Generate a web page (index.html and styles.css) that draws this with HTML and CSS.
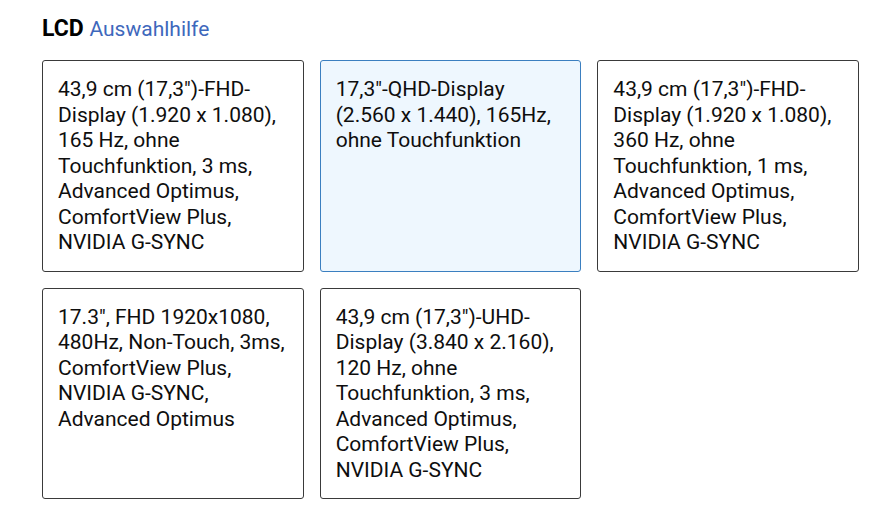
FILE: index.html
```html
<!DOCTYPE html>
<html>
<head>
    <title>LCD Auswahlhilfe</title>
<link rel="stylesheet" href="styles.css">
</head>
<body>
    <div class="picker">
        <h3 class="picker-title">LCD <a href="#" class="help">Auswahlhilfe</a></h3>
        <div class="options">
            <div class="option">43,9 cm (17,3")-FHD-Display (1.920 x 1.080), 165 Hz, ohne Touchfunktion, 3 ms, Advanced Optimus, ComfortView Plus, NVIDIA G-SYNC</div>
            <div class="option selected">17,3"-QHD-Display (2.560 x 1.440), 165Hz, ohne Touchfunktion</div>
            <div class="option">43,9 cm (17,3")-FHD-Display (1.920 x 1.080), 360 Hz, ohne Touchfunktion, 1 ms, Advanced Optimus, ComfortView Plus, NVIDIA G-SYNC</div>
            <div class="option">17.3", FHD 1920x1080, 480Hz, Non-Touch, 3ms, ComfortView Plus, NVIDIA G-SYNC, Advanced Optimus</div>
            <div class="option">43,9 cm (17,3")-UHD-Display (3.840 x 2.160), 120 Hz, ohne Touchfunktion, 3 ms, Advanced Optimus, ComfortView Plus, NVIDIA G-SYNC</div>
        </div>
    </div>
</body>
</html>
```
FILE: styles.css
```css
body {
  margin: 0;
  background-color: #ffffff;
  font-family: Roboto, "Liberation Sans", sans-serif;
  color: #0e0e0e;
}
.picker {
  padding: 13px 0 0 42px;
  width: 817px;
}
.picker-title {
  margin: 0 0 15px 0;
  font-size: 23px;
  line-height: 31px;
  font-weight: 700;
  color: #000000;
}
.help {
  font-weight: 400;
  font-size: 21px;
  color: #3e68bc;
  text-decoration: none;
}
.options {
  display: grid;
  grid-template-columns: repeat(3, 1fr);
  gap: 16px;
}
.option {
  border: 1px solid #3a3a3a;
  border-radius: 3px;
  padding: 16px 15px 15px;
  font-size: 21px;
  line-height: 25.5px;
}
.selected {
  border-color: #3b7fc0;
  background-color: #eef7fe;
}
```
